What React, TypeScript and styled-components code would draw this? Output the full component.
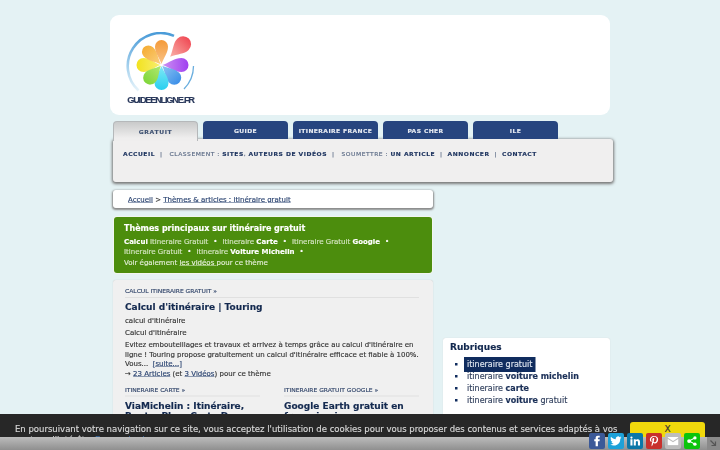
import React from "react";
import styled, { createGlobalStyle } from "styled-components";

const Global = createGlobalStyle`
  html, body { margin: 0; padding: 0; height: 450px; overflow: hidden; background: #e4f2f4; }
  body { font-family: "DejaVu Sans", sans-serif; color: #333; }
  * { box-sizing: border-box; }
`;
const Frame = styled.div`
  width: 720px; height: 450px; overflow: hidden;
`;
/* The page is laid out at twice its size and shown at half scale, so small type keeps its true widths; the soft blur matches the reference's scaled look. */
const Stage = styled.div`
  position: relative; width: 1440px; height: 900px; overflow: hidden;
  transform: scale(0.5); transform-origin: 0 0; font-size: 14px; filter: blur(0.6px);
  -webkit-text-stroke: 0.3px;
`;
const Page = styled.div`
  width: 1000px; margin-left: 220px; padding-top: 30px;
`;
const Header = styled.header`
  height: 200px; background: #fff; border-radius: 18px; padding: 34px 0 0 30px;
`;
const LogoBox = styled.div`
  width: 144px; display: flex; flex-direction: column; align-items: center;
`;
const LogoText = styled.div`
  font: bold 18.500px "Liberation Sans", sans-serif; color: #2b3a5c; letter-spacing: -2.500px;
  margin: -2px 0 0 -2px; white-space: nowrap; line-height: 20px;
`;
const Tabs = styled.nav`
  display: flex; gap: 10px; margin: 12px 0 0 6px; height: 36px; position: relative; z-index: 1;
`;
const Tab = styled.div<{ $active?: boolean }>`
  width: 170px; height: ${p => (p.$active ? "40px" : "36px")};
  border-radius: 8px 8px 0 0;
  background: ${p => (p.$active ? "linear-gradient(#c9caca, #efeeee 85%)" : "#27457f")};
  color: ${p => (p.$active ? "#3f5273" : "#e8ecf3")};
  border: ${p => (p.$active ? "2px solid #b5b8ba" : "0")};
  border-bottom: 0;
  font-size: 12px; font-weight: bold; letter-spacing: ${p => (p.$active ? "1.3px" : "0.8px")};
  display: flex; align-items: center; justify-content: center;
  padding-top: ${p => (p.$active ? "0" : "2px")};
  white-space: nowrap;
`;
const NavPanel = styled.div`
  width: 1000px; height: 86px; margin-left: 6px; background: #f0efef;
  border-radius: 6px; box-shadow: 0 2px 6px 2px #777;
  padding: 21px 20px; font-size: 12px; letter-spacing: 1px; color: #5a6a85;
  white-space: nowrap; line-height: 18px;
`;
const NavLink = styled.b`
  color: #1f3560;
`;
const Sep = styled.span<{ $wide?: boolean }>`
  margin: 0 ${p => (p.$wide ? "14px" : "10px")} 0 10px;
`;
const Columns = styled.div`
  display: flex; align-items: flex-start; gap: 20px; margin-top: 16px; margin-left: 6px;
`;
const Left = styled.main`
  width: 640px; flex: none; display: flex; flex-direction: column;
`;
const Crumb = styled.div`
  height: 36px; line-height: 36px; background: #fff; border-radius: 6px; box-shadow: 0 2px 4px 2px #8a8a8a;
  padding-left: 30px; font-size: 14px; color: #333;
`;
const U = styled.span`
  text-decoration: underline; color: #27406f;
`;
const Green = styled.section`
  margin: 18px 2px 0; height: 112px; background: #4c8d0d; border-radius: 6px;
  box-shadow: 0 0 0 2px #f2f6ef; padding: 11px 20px 0 20px; color: #d6e6c3; font-size: 14px;
`;
const GreenTitle = styled.div`
  font-size: 16px; font-weight: bold; color: #fff; line-height: 22px; margin-bottom: 5px;
`;
const GreenLine = styled.div`
  white-space: nowrap; line-height: 20px;
  & b { color: #fff; }
`;
const GreenLast = styled.div`
  margin-top: 1px; line-height: 22px; white-space: nowrap; color: #e3eed7;
  & u { color: #e9f2df; }
`;
const Dot = styled.span`
  margin: 0 10px; color: #fff;
`;
const Card = styled.section`
  margin-top: 14px; height: 400px; background: #f0f0f0; border-radius: 6px;
  box-shadow: 0 0 2px #bbb; padding: 14px 28px 0 24px;
`;
const Kicker = styled.div`
  font-size: 12px; color: #32466b; line-height: 16px; padding-bottom: 4px; border-bottom: 2px solid #e0e0e0;
  white-space: nowrap;
`;
const Title = styled.h2`
  margin: 6px 0 6px; font-size: 18px; line-height: 24px; font-weight: bold; color: #13294f;
`;
const SubTitle = styled(Title)`
  margin-top: 8px; line-height: 20px;
`;
const Body = styled.p`
  margin: 0 0 5px; font-size: 14px; line-height: 19px; color: #333;
`;
const Para = styled(Body)`
  margin-bottom: 1px; white-space: nowrap;
`;
const Sub = styled.div`
  display: flex; gap: 48px; margin-top: 14px;
`;
const SubCol = styled.div`
  width: 270px; flex: none;
`;
const Right = styled.aside`
  margin-top: 296px; width: 334px; height: 200px; background: #fff;
  border-radius: 6px; padding: 6px 14px; box-shadow: 0 0 2px #ccc;
`;
const RTitle = styled.h3`
  margin: 0 0 11px; font-size: 18px; line-height: 24px; color: #13294f; font-weight: bold;
`;
const List = styled.ul`
  margin: 0; padding: 0 0 0 34px; font-size: 16px; color: #333; list-style: none;
`;
const Item = styled.li`
  position: relative; height: 24px; line-height: 24px; white-space: nowrap; color: #33425f;
  & b { color: #1a2f57; }
  &::before {
    content: ""; position: absolute; left: -24px; top: 9px; width: 5px; height: 5px; background: #102c5e;
  }
`;
const Highlight = styled.span`
  background: #102c5e; color: #dfe6f0; padding: 5px 6px 6px; margin-left: -6px;
`;
const Cookie = styled.div`
  position: absolute; left: 0; right: 0; top: 828px; height: 46px; background: #272727; overflow: hidden;
  color: #d8d8d8; font-size: 17px; line-height: 22px; padding: 19px 0 0 30px;
`;
const CookieText = styled.div`
  width: 1220px;
`;
const CookieLink = styled.span`
  color: #3a6ca5;
`;
const Accept = styled.div`
  position: absolute; left: 1260px; top: 16px; width: 150px; height: 48px; background: #f0d80c; border-radius: 6px;
  color: #333; text-align: center; font-size: 18px; line-height: 26px;
`;
const Bottom = styled.div`
  position: absolute; left: 0; right: 0; top: 874px; height: 26px; background: linear-gradient(#bcbcbc, #8f8f8f);
`;
const Social = styled.div`
  position: absolute; left: 1178px; top: 866px; display: flex; gap: 6px;
`;
const SBtn = styled.div<{ $c: string }>`
  width: 32px; height: 32px; border-radius: 4px; background: ${p => p.$c};
  display: flex; align-items: center; justify-content: center; color: #fff;
`;
const Corner = styled.div`
  position: absolute; left: 1414px; top: 874px; width: 26px; height: 26px; background: #8a8a8a;
  display: flex; align-items: center; justify-content: center;
`;

const colors: [string, string][] = [
  ["#f2e21e", "#f8ee70"],
  ["#f5ad35", "#fbd080"],
  ["#f49a38", "#f9c488"],
  ["#f04a55", "#f9b0a8"],
  ["#a040f0", "#cc90f2"],
  ["#3d8fe8", "#8cc4f2"],
  ["#28cff0", "#80e8f5"],
  ["#80d63a", "#b0e870"],
];

function Petal({ a, i, r0, l, w }: { a: number; i: number; r0: number; l: number; w: number }) {
  return (
    <path
      transform={`rotate(${a}) translate(0 ${-r0})`}
      d={`M0 0 C${-w * 0.4} ${-l * 0.3} ${-w} ${-l * 0.45} ${-w} ${-l + w} A${w} ${w} 0 0 1 ${w} ${-l + w} C${w} ${-l * 0.45} ${w * 0.4} ${-l * 0.3} 0 0Z`}
      fill={`url(#p${i})`}
    />
  );
}

const Logo = () => (
  <svg width="144" height="128" viewBox="0 0 72 64">
    <defs>
      <linearGradient id="ring" x1="0" y1="0" x2="0" y2="1">
        <stop offset="0" stopColor="#4a9bd8" />
        <stop offset="0.6" stopColor="#a9d3ee" />
        <stop offset="1" stopColor="#e6f3fa" />
      </linearGradient>
      {colors.map((p, i) => (
        <linearGradient key={i} id={"p" + i} x1="0" y1="1" x2="0" y2="0">
          <stop offset="0" stopColor={p[1]} />
          <stop offset="1" stopColor={p[0]} />
        </linearGradient>
      ))}
    </defs>
    <path d="M13.500 58.500 A33 33 0 0 1 49 3.900" fill="none" stroke="url(#ring)" strokeWidth="2.600" />
    <path d="M68.500 34 A33 33 0 0 1 59 57" fill="none" stroke="#6aaede" strokeWidth="1.300" />
    <g transform="translate(36.500 33)">
      <Petal a={-90} i={0} r0={1} l={24} w={7} />
      <Petal a={-45} i={1} r0={1} l={24} w={6.500} />
      <Petal a={0} i={2} r0={1} l={24} w={6.500} />
      <Petal a={46} i={3} r0={12} l={26} w={8} />
      <Petal a={90} i={4} r0={1} l={26} w={7} />
      <Petal a={135} i={5} r0={1} l={24} w={7} />
      <Petal a={180} i={6} r0={1} l={24} w={7} />
      <Petal a={222} i={7} r0={1} l={23} w={7} />
    </g>
  </svg>
);

const FB = () => <svg width="22" height="22" viewBox="0 0 24 24" fill="#fff"><path d="M14 8V6c0-1 .5-1.500 1.500-1.500H18V0h-3.500C11 0 9 2.200 9 5.500V8H6v4.500h3V24h5V12.500h3.500L18 8z" /></svg>;
const TW = () => <svg width="24" height="24" viewBox="0 0 24 24" fill="#fff"><path d="M23 5c-.8.400-1.700.600-2.600.700.900-.600 1.600-1.400 2-2.500-.900.500-1.800.900-2.900 1.100a4.600 4.600 0 0 0-7.900 4.200C7.800 8.300 4.400 6.500 2.100 3.700a4.600 4.600 0 0 0 1.400 6.100c-.700 0-1.400-.200-2.100-.600 0 2.300 1.600 4.200 3.700 4.600-.700.200-1.400.200-2.100.100.600 1.900 2.300 3.200 4.300 3.200A9.300 9.300 0 0 1 .500 19a13 13 0 0 0 20-11.600c.900-.600 1.700-1.400 2.500-2.400z" /></svg>;
const LI = () => <svg width="20" height="20" viewBox="0 0 24 24" fill="#fff"><path d="M1 8h5v15H1zM3.500 1a2.700 2.700 0 1 1 0 5.400 2.700 2.700 0 0 1 0-5.400zM9 8h4.800v2.100c.7-1.300 2.300-2.500 4.700-2.500 5 0 5.500 3.300 5.500 7.500V23h-5v-7c0-1.700 0-3.800-2.400-3.800S14 14 14 15.900V23H9z" /></svg>;
const PI = () => <svg width="22" height="24" viewBox="0 0 24 24" fill="#fff"><path d="M12 1C6 1 3 5 3 8.800c0 2.200.9 4.300 2.800 5 .3.100.6 0 .7-.3l.3-1.100c.1-.3 0-.5-.2-.7-.6-.7-.9-1.500-.9-2.700 0-3.400 2.600-6.500 6.700-6.500 3.600 0 5.600 2.200 5.600 5.200 0 3.900-1.700 7.200-4.300 7.200-1.400 0-2.500-1.200-2.200-2.600.4-1.700 1.200-3.600 1.200-4.800 0-1.100-.6-2-1.800-2-1.400 0-2.600 1.500-2.600 3.500 0 1.300.4 2.100.4 2.100l-1.700 7.300c-.5 2.100-.1 4.800 0 5 0 .2.200.2.300.1.100-.2 1.800-2.200 2.300-4.200l.9-3.500c.5.900 1.800 1.700 3.300 1.700 4.300 0 7.200-3.900 7.200-9.200C21 4.600 17.600 1 12 1z" /></svg>;
const ML = () => <svg width="22" height="18" viewBox="0 0 24 18" fill="#fff"><path d="M0 1.500A1.500 1.500 0 0 1 1.500 0h21A1.500 1.500 0 0 1 24 1.500L12 9z" /><path d="M0 4l12 7.500L24 4v12.500a1.500 1.500 0 0 1-1.500 1.500h-21A1.500 1.500 0 0 1 0 16.500z" /></svg>;
const SH = () => <svg width="20" height="22" viewBox="0 0 24 24" fill="#fff"><circle cx="19" cy="4.500" r="4" /><circle cx="19" cy="19.500" r="4" /><circle cx="5" cy="12" r="4.500" /><path d="M5 12L19 4.500M5 12l14 7.500" stroke="#fff" strokeWidth="2.500" /></svg>;

export default function App() {
  return (
    <Frame>
      <Global />
      <Stage>
        <Page>
          <Header>
            <LogoBox>
              <Logo />
              <LogoText>GUIDEENLIGNE.FR</LogoText>
            </LogoBox>
          </Header>
          <Tabs>
            <Tab $active>GRATUIT</Tab>
            <Tab>GUIDE</Tab>
            <Tab>ITINERAIRE FRANCE</Tab>
            <Tab>PAS CHER</Tab>
            <Tab>ILE</Tab>
          </Tabs>
          <NavPanel>
            <NavLink>ACCUEIL</NavLink><Sep $wide>|</Sep>
            CLASSEMENT : <NavLink>SITES</NavLink>, <NavLink>AUTEURS DE VIDÉOS</NavLink><Sep $wide>|</Sep>
            SOUMETTRE : <NavLink>UN ARTICLE</NavLink><Sep>|</Sep><NavLink>ANNONCER</NavLink><Sep>|</Sep><NavLink>CONTACT</NavLink>
          </NavPanel>
          <Columns>
            <Left>
              <Crumb><U>Accueil</U> &gt; <U>Thèmes &amp; articles : itinéraire gratuit</U></Crumb>
              <Green>
                <GreenTitle>Thèmes principaux sur itinéraire gratuit</GreenTitle>
                <GreenLine><b>Calcul</b> Itineraire Gratuit<Dot>•</Dot>Itineraire <b>Carte</b><Dot>•</Dot>Itineraire Gratuit <b>Google</b><Dot>•</Dot></GreenLine>
                <GreenLine>Itineraire Gratuit<Dot>•</Dot>Itineraire <b>Voiture Michelin</b><Dot>•</Dot></GreenLine>
                <GreenLast>Voir également <u>les vidéos </u>pour ce thème</GreenLast>
              </Green>
              <Card>
                <Kicker>CALCUL ITINERAIRE GRATUIT »</Kicker>
                <Title>Calcul d'itinéraire | Touring</Title>
                <Body>calcul d'itinéraire</Body>
                <Body>Calcul d'itinéraire</Body>
                <Para>Evitez embouteillages et travaux et arrivez à temps grâce au calcul d'itinéraire en<br />ligne ! Touring propose gratuitement un calcul d'itinéraire efficace et fiable à 100%.<br />Vous...&nbsp; <U>[suite...]</U></Para>
                <Body>→ <U>23 Articles</U> (et <U>3 Vidéos</U>) pour ce thème</Body>
                <Sub>
                  <SubCol>
                    <Kicker>ITINERAIRE CARTE »</Kicker>
                    <SubTitle>ViaMichelin : Itinéraire, Route, Plan, Carte De</SubTitle>
                  </SubCol>
                  <SubCol>
                    <Kicker>ITINERAIRE GRATUIT GOOGLE »</Kicker>
                    <SubTitle>Google Earth gratuit en français : jeux non satellite</SubTitle>
                  </SubCol>
                </Sub>
              </Card>
            </Left>
            <Right>
              <RTitle>Rubriques</RTitle>
              <List>
                <Item><Highlight>itineraire gratuit</Highlight></Item>
                <Item>itineraire <b>voiture michelin</b></Item>
                <Item>itineraire <b>carte</b></Item>
                <Item>itineraire <b>voiture</b> gratuit</Item>
              </List>
            </Right>
          </Columns>
        </Page>
        <Cookie>
          <CookieText>En poursuivant votre navigation sur ce site, vous acceptez l'utilisation de cookies pour vous proposer des contenus et services adaptés à vos centres d'intérêts. <CookieLink>En savoir plus</CookieLink></CookieText>
          <Accept>X</Accept>
        </Cookie>
        <Bottom />
        <Social>
          <SBtn $c="#3b5998"><FB /></SBtn>
          <SBtn $c="#1da1d8"><TW /></SBtn>
          <SBtn $c="#0a77a8"><LI /></SBtn>
          <SBtn $c="#c8302c"><PI /></SBtn>
          <SBtn $c="#bdbdbd"><ML /></SBtn>
          <SBtn $c="#0cc40c"><SH /></SBtn>
        </Social>
        <Corner><svg width="16" height="16" viewBox="0 0 8 8"><path d="M1 1l5 5M6 2v4H2" stroke="#555" strokeWidth="1.200" fill="none" /></svg></Corner>
      </Stage>
    </Frame>
  );
}
